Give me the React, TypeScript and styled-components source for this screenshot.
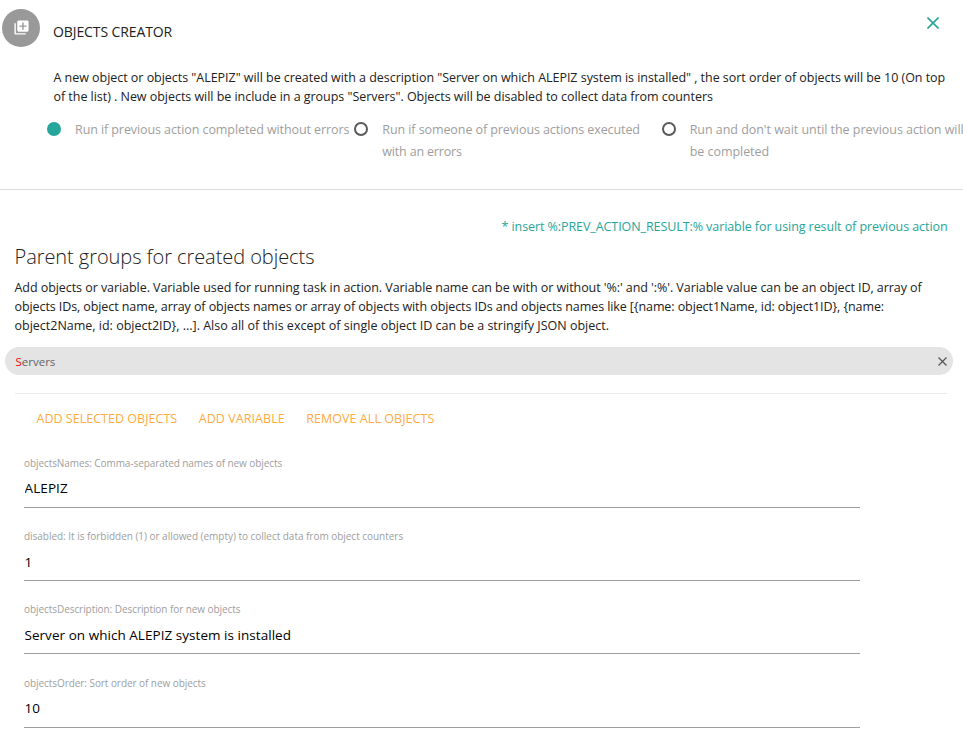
import React from "react";
import styled, { createGlobalStyle } from "styled-components";
import { MdLibraryAdd } from "react-icons/md";

const GlobalStyle = createGlobalStyle`
  * { box-sizing: border-box; }
  html, body { margin: 0; padding: 0; background: #fff; overflow: hidden; }
  body { font-family: "Open Sans", "Noto Sans", sans-serif; font-size: 12.5px; color: #212121; }
  h1, h2, p { margin: 0; font-weight: 400; }
  button { border: 0; padding: 0; background: none; font-family: inherit; cursor: pointer; }
`;

const Page = styled.main`
  width: 963px;
  height: 741px;
  overflow: hidden;
  display: flex;
  flex-direction: column;
`;

const Header = styled.header`
  flex: none;
  height: 190px;
  border-bottom: 1px solid #dcdcdc;
`;

const TitleRow = styled.div`
  display: flex;
  height: 68px;
  padding: 9px 0 0 2px;
`;

const Avatar = styled.div`
  width: 38px;
  height: 38px;
  border-radius: 50%;
  background: #999;
  color: #fff;
  display: flex;
  align-items: center;
  justify-content: center;
  padding: 0 0 2px 0;
  svg { display: block; width: 17px; height: 17px; }
`;

const Title = styled.h1`
  flex: 1;
  margin: 13px 0 0 13px;
  font-size: 14px;
  line-height: 20px;
  letter-spacing: -0.1px;
`;

const CloseButton = styled.button`
  width: 12px;
  height: 12px;
  margin: 8px 24px 0 0;
  color: #26a69a;
  svg { display: block; }
`;

const Line = styled.span<{ $spacing?: number }>`
  display: block;
  white-space: nowrap;
  letter-spacing: ${(p) => p.$spacing ?? 0}px;
`;

const Summary = styled.p`
  padding-left: 53.5px;
  line-height: 19px;
`;

const RunModes = styled.div`
  display: grid;
  grid-template-columns: repeat(3, 307.33px);
  margin: 13px 0 0 47px;
`;

const RunMode = styled.label`
  display: flex;
  gap: 14px;
  color: #9e9e9e;
  line-height: 22px;
`;

const Radio = styled.span<{ $checked?: boolean }>`
  flex: none;
  width: 14px;
  height: 14px;
  margin-top: 3px;
  border-radius: 50%;
  border: 2px solid ${(p) => (p.$checked ? "#26a69a" : "#5a5a5a")};
  background: ${(p) => (p.$checked ? "#26a69a" : "transparent")};
`;

const Hint = styled.p`
  display: flex;
  justify-content: flex-end;
  padding: 27px 15.5px 0 0;
  line-height: 19px;
  color: #26a69a;
`;

const Heading = styled.h2`
  margin: 6px 0 0 14.5px;
  font-size: 20px;
  font-weight: 300;
  line-height: 30px;
  letter-spacing: -0.06px;
`;

const Description = styled.p`
  margin: 6px 0 0 14.5px;
  line-height: 19px;
`;

const Chip = styled.div`
  flex: none;
  display: flex;
  align-items: center;
  justify-content: space-between;
  height: 28px;
  margin: 12px 10px 0 5px;
  padding: 0 6.5px 0 10.5px;
  border-radius: 14px;
  background: #e4e4e4;
  color: #646464;
  font-size: 11.5px;
`;

const ChipText = styled.span`
  padding-top: 2px;
  line-height: 26px;
`;

const FirstLetter = styled.span`
  color: #f00;
`;

const ChipRemove = styled.button`
  width: 9px;
  height: 9px;
  color: #555;
  svg { display: block; }
`;

const Actions = styled.div`
  flex: none;
  display: flex;
  gap: 21.5px;
  height: 54px;
  margin: 18px 16px 0 15px;
  padding: 15px 0 0 21.5px;
  border-top: 1px solid #e9e9e9;
`;

const Action = styled.button<{ $spacing: number }>`
  height: 19px;
  font-size: 12.5px;
  line-height: 19px;
  letter-spacing: ${(p) => p.$spacing}px;
  color: #ffab40;
`;

const Fields = styled.div`
  display: flex;
  flex-direction: column;
  width: 836px;
  margin: 8.7px 0 0 24px;
`;

const Field = styled.label`
  display: block;
  height: 73.33px;
`;

const FieldLabel = styled.span<{ $spacing: number }>`
  display: block;
  height: 16px;
  line-height: 15px;
  font-size: 10px;
  letter-spacing: ${(p) => p.$spacing}px;
  color: #9e9e9e;
`;

const FieldInput = styled.input<{ $spacing: number }>`
  display: block;
  width: 100%;
  height: 36px;
  padding: 0 0 2px 0.5px;
  border: 0;
  border-bottom: 1px solid #9e9e9e;
  outline: none;
  background: transparent;
  color: #000;
  font-family: inherit;
  font-size: 13.5px;
  letter-spacing: ${(p) => p.$spacing}px;
`;

const Cross = ({ size, stroke }: { size: number; stroke: number }) => (
  <svg width={size} height={size} viewBox={`0 0 ${size} ${size}`} fill="none" stroke="currentColor" strokeWidth={stroke}>
    <path d={`M.5 .5 L${size - 0.5} ${size - 0.5} M${size - 0.5} .5 L.5 ${size - 0.5}`} />
  </svg>
);

type TextLine = { text: string; spacing: number };

const summary: TextLine[] = [
  { text: 'A new object or objects "ALEPIZ" will be created with a description "Server on which ALEPIZ system is installed" , the sort order of objects will be 10 (On top', spacing: -0.034 },
  { text: 'of the list) . New objects will be include in a groups "Servers". Objects will be disabled to collect data from counters', spacing: -0.036 },
];

const runModes: { checked?: boolean; lines: TextLine[] }[] = [
  { checked: true, lines: [{ text: "Run if previous action completed without errors", spacing: -0.085 }] },
  {
    lines: [
      { text: "Run if someone of previous actions executed", spacing: -0.085 },
      { text: "with an errors", spacing: -0.18 },
    ],
  },
  {
    lines: [
      { text: "Run and don't wait until the previous action will", spacing: -0.04 },
      { text: "be completed", spacing: -0.04 },
    ],
  },
];

const description: TextLine[] = [
  { text: "Add objects or variable. Variable used for running task in action. Variable name can be with or without '%:' and ':%'. Variable value can be an object ID, array of", spacing: -0.061 },
  { text: "objects IDs, object name, array of objects names or array of objects with objects IDs and objects names like [{name: object1Name, id: object1ID}, {name:", spacing: -0.09 },
  { text: "object2Name, id: object2ID}, ...]. Also all of this except of single object ID can be a stringify JSON object.", spacing: -0.004 },
];

const actions: TextLine[] = [
  { text: "ADD SELECTED OBJECTS", spacing: 0.02 },
  { text: "ADD VARIABLE", spacing: 0.06 },
  { text: "REMOVE ALL OBJECTS", spacing: 0.05 },
];

const fields = [
  { label: "objectsNames: Comma-separated names of new objects", labelSpacing: -0.075, value: "ALEPIZ", spacing: 0.1 },
  { label: "disabled: It is forbidden (1) or allowed (empty) to collect data from object counters", labelSpacing: -0.027, value: "1", spacing: 0 },
  { label: "objectsDescription: Description for new objects", labelSpacing: -0.065, value: "Server on which ALEPIZ system is installed", spacing: 0.04 },
  { label: "objectsOrder: Sort order of new objects", labelSpacing: -0.06, value: "10", spacing: 0 },
];

const Lines = ({ items }: { items: TextLine[] }) => (
  <>
    {items.map((l) => (
      <Line key={l.text} $spacing={l.spacing}>{l.text}</Line>
    ))}
  </>
);

export default function App() {
  return (
    <Page>
      <GlobalStyle />
      <Header>
        <TitleRow>
          <Avatar><MdLibraryAdd /></Avatar>
          <Title>OBJECTS CREATOR</Title>
          <CloseButton aria-label="Close"><Cross size={12} stroke={1.6} /></CloseButton>
        </TitleRow>
        <Summary><Lines items={summary} /></Summary>
        <RunModes>
          {runModes.map((m) => (
            <RunMode key={m.lines[0].text}>
              <Radio $checked={m.checked} />
              <span><Lines items={m.lines} /></span>
            </RunMode>
          ))}
        </RunModes>
      </Header>
      <Hint>
        <Line $spacing={-0.08}>* insert %:PREV_ACTION_RESULT:% variable for using result of previous action</Line>
      </Hint>
      <Heading>Parent groups for created objects</Heading>
      <Description><Lines items={description} /></Description>
      <Chip>
        <ChipText><FirstLetter>S</FirstLetter>ervers</ChipText>
        <ChipRemove aria-label="Remove"><Cross size={9} stroke={1.2} /></ChipRemove>
      </Chip>
      <Actions>
        {actions.map((a) => (
          <Action key={a.text} $spacing={a.spacing}>{a.text}</Action>
        ))}
      </Actions>
      <Fields>
        {fields.map((f) => (
          <Field key={f.label}>
            <FieldLabel $spacing={f.labelSpacing}>{f.label}</FieldLabel>
            <FieldInput defaultValue={f.value} $spacing={f.spacing} />
          </Field>
        ))}
      </Fields>
    </Page>
  );
}
